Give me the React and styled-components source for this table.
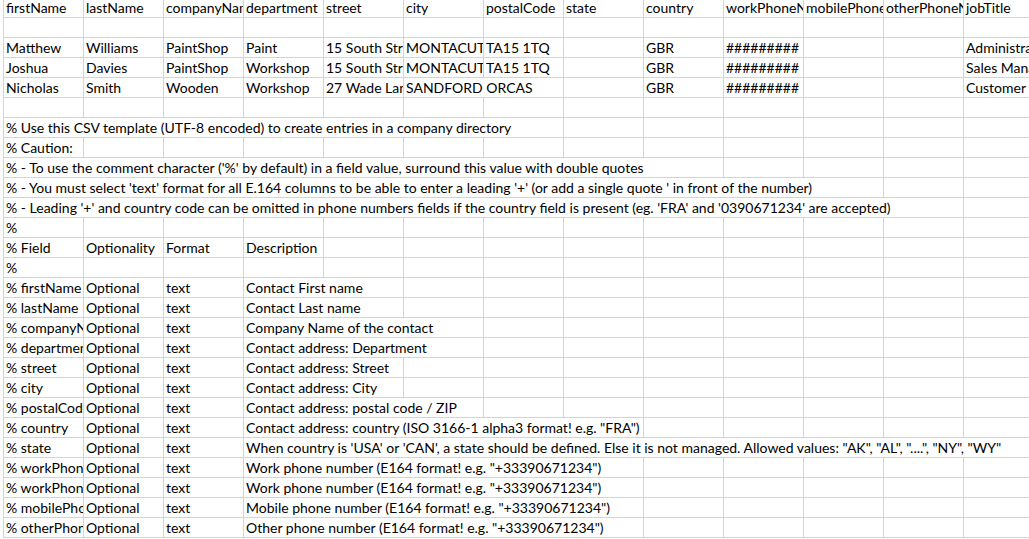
import React from 'react';
import styled, { createGlobalStyle } from 'styled-components';

const GlobalStyle = createGlobalStyle`
  html, body {
    margin: 0;
    padding: 0;
    background: #ffffff;
    overflow: hidden;
  }
`;

const Sheet = styled.div`
  display: grid;
  grid-template-columns: repeat(13, 80px);
  grid-template-rows: 18px;
  grid-auto-rows: 20px;
  margin-left: 3px;
  border-left: 1px solid #d4d4d4;
  width: max-content;
  font-family: Lato, "Liberation Sans", sans-serif;
  font-size: 14px;
  color: #000000;
`;

const Cell = styled.div`
  grid-column: span ${(p) => p.$span || 1};
  box-sizing: border-box;
  display: flex;
  align-items: flex-end;
  padding: 0 2px;
  border-right: 1px solid #d4d4d4;
  border-bottom: 1px solid #d4d4d4;
  line-height: 19px;
  white-space: nowrap;
  overflow: hidden;
`;

// number too wide for its column, shown the way the sheet shows it
const HASH = '#########';

// each row lists its cells; a cell is a string or [text, span]
const rows = [
  ['firstName', 'lastName', 'companyName', 'department', 'street', 'city', 'postalCode', 'state', 'country', 'workPhoneNumber', 'mobilePhoneNumber', 'otherPhoneNumber', 'jobTitle'],
  [],
  ['Matthew', 'Williams', 'PaintShop', 'Paint', '15 South Street', 'MONTACUTE', 'TA15 1TQ', '', 'GBR', HASH, '', '', 'Administrator'],
  ['Joshua', 'Davies', 'PaintShop', 'Workshop', '15 South Street', 'MONTACUTE', 'TA15 1TQ', '', 'GBR', HASH, '', '', 'Sales Manager'],
  ['Nicholas', 'Smith', 'Wooden', 'Workshop', '27 Wade Lane', ['SANDFORD ORCAS', 2], '', 'GBR', HASH, '', '', 'Customer Service'],
  [],
  [['% Use this CSV template (UTF-8 encoded) to create entries in a company directory', 7]],
  ['% Caution:'],
  [["% - To use the comment character ('%' by default) in a field value, surround this value with double quotes", 9]],
  [["% - You must select 'text' format for all E.164 columns to be able to enter a leading '+' (or add a single quote ' in front of the number)", 11]],
  [["% - Leading '+' and country code can be omitted in phone numbers fields if the country field is present (eg. 'FRA' and '0390671234' are accepted)", 12]],
  ['%'],
  ['% Field', 'Optionality', 'Format', 'Description'],
  ['%'],
  ['% firstName', 'Optional', 'text', ['Contact First name', 2]],
  ['% lastName', 'Optional', 'text', ['Contact Last name', 2]],
  ['% companyName', 'Optional', 'text', ['Company Name of the contact', 3]],
  ['% department', 'Optional', 'text', ['Contact address: Department', 3]],
  ['% street', 'Optional', 'text', ['Contact address: Street', 2]],
  ['% city', 'Optional', 'text', ['Contact address: City', 2]],
  ['% postalCode', 'Optional', 'text', ['Contact address: postal code / ZIP', 3]],
  ['% country', 'Optional', 'text', ['Contact address: country (ISO 3166-1 alpha3 format! e.g. "FRA")', 5]],
  ['% state', 'Optional', 'text', ['When country is \'USA\' or \'CAN\', a state should be defined. Else it is not managed. Allowed values: "AK", "AL", "....", "NY", "WY"', 10]],
  ['% workPhoneNumber', 'Optional', 'text', ['Work phone number (E164 format! e.g. "+33390671234")', 5]],
  ['% workPhoneNumber2', 'Optional', 'text', ['Work phone number (E164 format! e.g. "+33390671234")', 5]],
  ['% mobilePhoneNumber', 'Optional', 'text', ['Mobile phone number (E164 format! e.g. "+33390671234")', 5]],
  ['% otherPhoneNumber', 'Optional', 'text', ['Other phone number (E164 format! e.g. "+33390671234")', 5]],
];

const fillRow = (row) => {
  const cells = row.map((c) => (Array.isArray(c) ? { text: c[0], span: c[1] } : { text: c, span: 1 }));
  let used = cells.reduce((n, c) => n + c.span, 0);
  while (used < 13) {
    cells.push({ text: '', span: 1 });
    used += 1;
  }
  return cells;
};

const App = () => {
  return (
    <>
      <GlobalStyle />
      <Sheet>
        {rows.map((row, r) =>
          fillRow(row).map((cell, i) => (
            <Cell key={`${r}-${i}`} $span={cell.span}>
              {cell.text}
            </Cell>
          ))
        )}
      </Sheet>
    </>
  );
};

export default App;
